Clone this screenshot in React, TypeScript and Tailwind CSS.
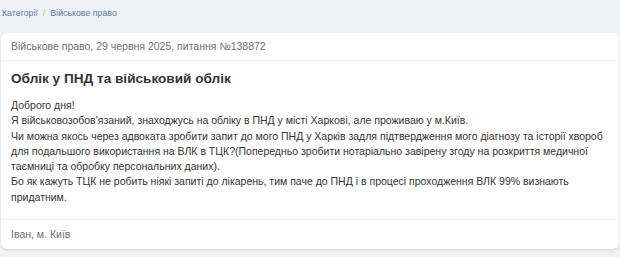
export default function App() {
  return (
    <div className="min-h-[257px] bg-[#f0f1f5] font-['Liberation_Sans',Arial,sans-serif] pt-[8px] px-px">
      <nav className="flex items-center gap-[5px] text-[8.8px] leading-[11px] pl-[1px] text-[#5d7ca0]">
        <span>Категорії</span>
        <span className="text-[#b5bcc8]">/</span>
        <span>Військове право</span>
      </nav>
      <div className="mt-[14px] bg-white rounded-[6px] shadow-[0_1px_2px_rgba(0,0,0,0.12)]">
        <div className="h-[28px] flex items-center px-[10px] text-[10.5px] text-[#707070] border-b border-[#f2f2f2]">
          Військове право, 29 червня 2025, питання №138872
        </div>
        <div className="px-[10px] pt-[9px] pb-[14px]">
          <h1 className="text-[13.6px] font-bold text-[#333] leading-[17px]">Облік у ПНД та військовий облік</h1>
          <div className="mt-[11px] text-[10.5px] leading-[15.3px] text-[#333]">
            <p>Доброго дня!</p>
            <p>Я військовозобов'язаний, знаходжусь на обліку в ПНД у місті Харкові, але проживаю у м.Київ.</p>
            <p>
              Чи можна якось через адвоката зробити запит до мого ПНД у Харків задля підтвердження мого діагнозу та історії хвороб для подальшого використання на ВЛК в ТЦК?(Попередньо зробити нотаріально завірену згоду на розкриття медичної таємниці та обробку персональних даних).
            </p>
            <p>Бо як кажуть ТЦК не робить ніякі запиті до лікарень, тим паче до ПНД і в процесі проходження ВЛК 99% визнають придатним.</p>
          </div>
        </div>
        <div className="h-[30px] flex items-center px-[10px] text-[10.5px] text-[#707070] border-t border-[#f2f2f2]">
          Іван, м. Київ
        </div>
      </div>
    </div>
  );
}
